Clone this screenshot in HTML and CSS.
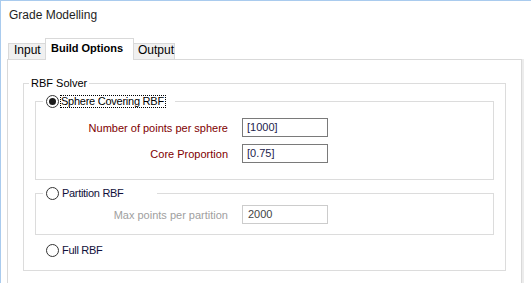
FILE: index.html
```html
<!DOCTYPE html>
<html>
<head>
<meta charset="utf-8">
<title>Grade Modelling</title>
<link rel="stylesheet" href="styles.css">
</head>
<body>
<div class="window">
  <div class="title">Grade Modelling</div>
  <div class="tabs">
    <div class="tab tab-input">Input</div>
    <div class="tab tab-active">Build Options</div>
    <div class="tab tab-output">Output</div>
  </div>
  <div class="panel">
    <fieldset class="group solver">
      <legend class="legend-text">RBF Solver</legend>
      <div class="solver-body">
        <fieldset class="group sub sphere">
          <legend class="radio-legend sphere-legend">
            <span class="radio checked"></span><span class="radio-label focus">Sphere Covering RBF</span>
          </legend>
          <div class="form-grid sphere-grid">
            <span class="field-label">Number of points per sphere</span>
            <div class="input">[1000]</div>
            <span class="field-label">Core Proportion</span>
            <div class="input">[0.75]</div>
          </div>
        </fieldset>
        <fieldset class="group sub partition">
          <legend class="radio-legend partition-legend">
            <span class="radio"></span><span class="radio-label plain">Partition RBF</span>
          </legend>
          <div class="form-grid partition-grid">
            <span class="field-label disabled">Max points per partition</span>
            <div class="input disabled">2000</div>
          </div>
        </fieldset>
        <div class="radio-row">
          <span class="radio"></span><span class="radio-label plain">Full RBF</span>
        </div>
      </div>
    </fieldset>
  </div>
</div>
</body>
</html>
```
FILE: styles.css
```css
html, body {
  margin: 0;
  padding: 0;
}
body {
  width: 531px;
  height: 283px;
  overflow: hidden;
  background: #ffffff;
  font-family: "Liberation Sans", Arial, sans-serif;
  font-size: 11px;
  color: #000000;
}
.window {
  box-sizing: border-box;
  height: 283px;
  overflow: hidden;
  border-top: 1px solid #a9cbee;
  border-left: 1px solid #a9cbee;
}
.title {
  box-sizing: border-box;
  height: 37px;
  padding: 7px 0 0 8px;
  font-size: 12px;
  line-height: 15px;
  color: #1e1e1e;
}
.tabs {
  display: flex;
  align-items: flex-end;
  height: 21px;
  padding-left: 7px;
  position: relative;
  z-index: 1;
}
.tab {
  box-sizing: border-box;
  border: 1px solid #d9d9d9;
  border-bottom: none;
  background: #f0f0f0;
  font-size: 12px;
  line-height: 13px;
  height: 16px;
  padding: 0 0 2px 5px;
  color: #000;
  white-space: nowrap;
}
.tab-input {
  width: 38px;
}
.tab-active {
  width: 89px;
  height: 22px;
  margin-left: -1px;
  margin-bottom: -1px;
  padding: 3px 0 5px 5px;
  background: #ffffff;
  font-weight: bold;
  font-size: 11px;
  position: relative;
  z-index: 2;
}
.tab-output {
  width: 42px;
  margin-left: -1px;
  padding-left: 4px;
}
.panel {
  box-sizing: border-box;
  margin-left: 6px;
  width: 515px;
  height: 224px;
  border: 1px solid #d9d9d9;
  border-bottom: none;
  box-shadow: 2px 0 0 #ececec;
  padding: 16px 15px 0 15px;
}
.group {
  margin: 0;
  padding: 0;
  border: 1px solid #dcdcdc;
  min-width: 0;
}
.legend-text {
  margin-left: 5px;
  padding: 0 2px;
  line-height: 15px;
  color: #000;
}
.solver-body {
  padding: 4px 11px 13px 11px;
}
.radio-legend {
  box-sizing: border-box;
  display: flex;
  align-items: center;
  height: 13px;
  margin-left: 7px;
  padding: 0 0 0 3px;
}
.sphere-legend {
  width: 132px;
}
.partition-legend {
  width: 114px;
}
.radio {
  box-sizing: border-box;
  flex: none;
  width: 13px;
  height: 13px;
  border: 1px solid #333333;
  border-radius: 50%;
  background: #ffffff;
  position: relative;
}
.radio.checked::after {
  content: "";
  position: absolute;
  left: 2px;
  top: 2px;
  width: 7px;
  height: 7px;
  border-radius: 50%;
  background: #1a1a1a;
}
.radio-label {
  white-space: nowrap;
  line-height: 13px;
}
.focus {
  margin-left: 1px;
  line-height: 11px;
  border: 1px dotted #000;
  padding: 0 1px 0 0;
  color: #000;
  letter-spacing: -0.25px;
}
.plain {
  margin-left: 3px;
  color: #10103a;
  letter-spacing: -0.3px;
}
.form-grid {
  display: grid;
  grid-template-columns: 192px 86px;
  column-gap: 14px;
  row-gap: 7px;
  align-items: center;
}
.sphere-grid {
  margin-top: 10px;
  padding-bottom: 16px;
}
.partition-grid {
  margin-top: 5px;
  padding-bottom: 10px;
}
.partition {
  margin-top: 7px;
}
.field-label {
  text-align: right;
  color: #800000;
  white-space: nowrap;
}
.field-label.disabled {
  color: #a0a0a0;
}
.input {
  box-sizing: border-box;
  height: 19px;
  border: 1px solid #7a7a7a;
  padding-left: 4px;
  line-height: 17px;
  color: #23234d;
  background: #fff;
}
.input.disabled {
  border-color: #cccccc;
  padding-left: 5px;
  color: #444444;
}
.radio-row {
  display: flex;
  align-items: center;
  height: 13px;
  margin-top: 9px;
  padding-left: 11px;
}
```
